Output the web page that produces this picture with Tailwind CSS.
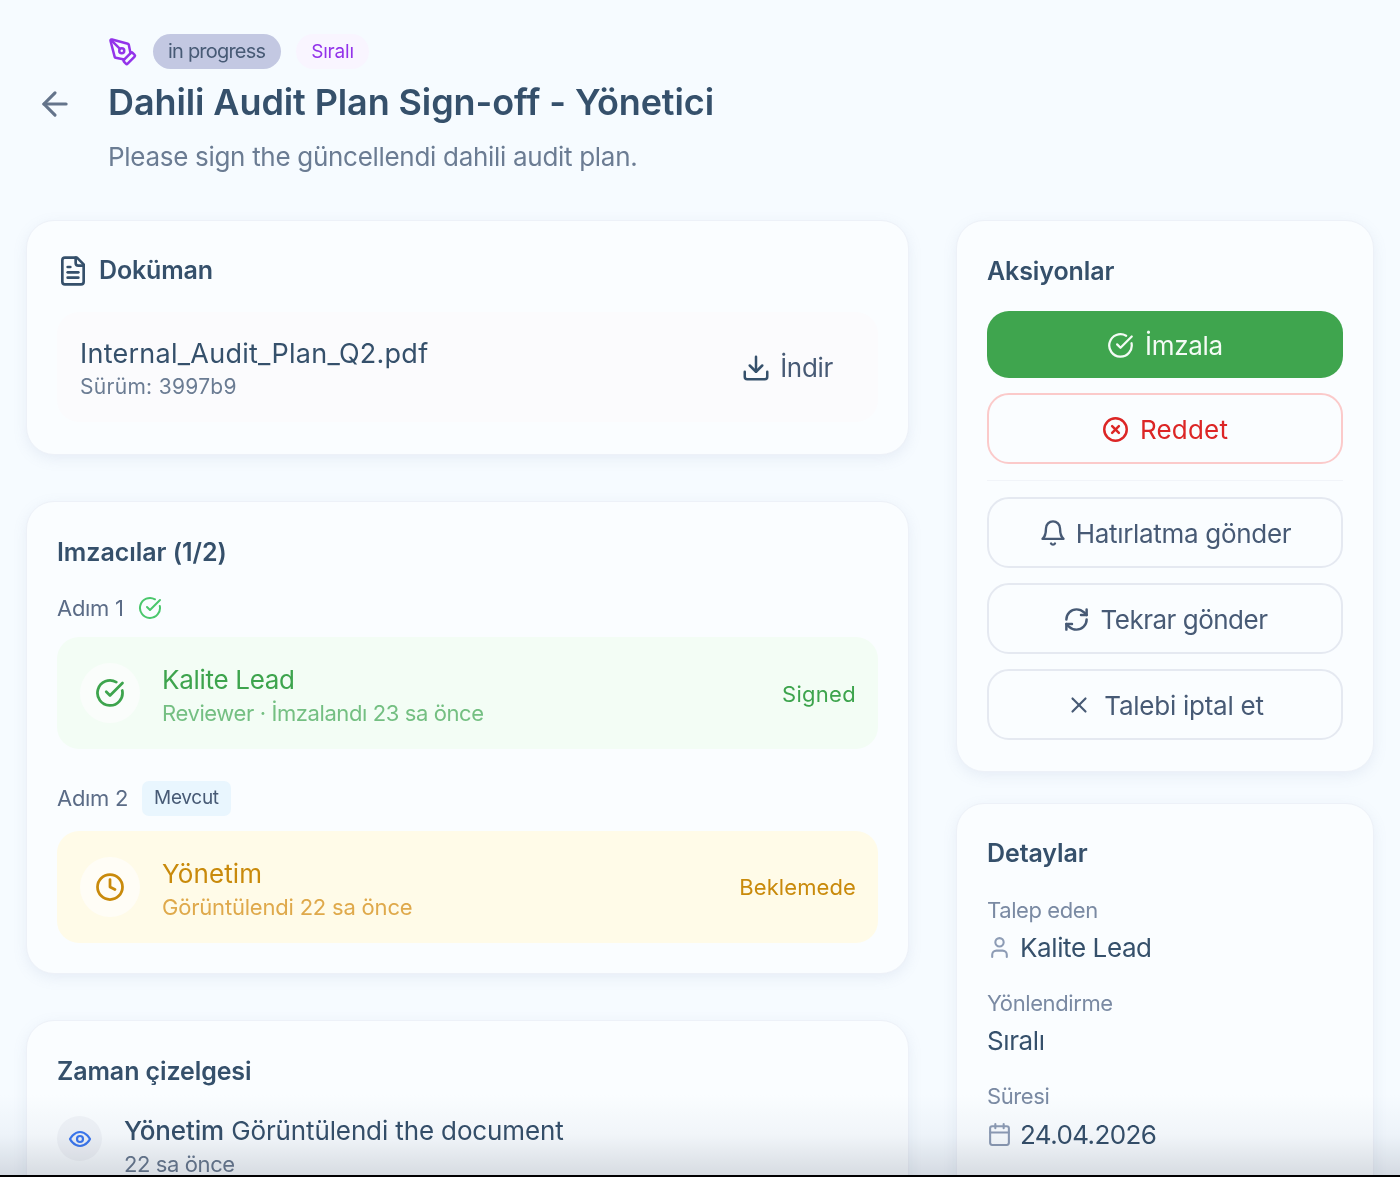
<!DOCTYPE html>
<html lang="en">
<head>
    <meta charset="UTF-8">
    <title>Dahili Audit Plan Sign-off</title>
    <script src="https://cdn.jsdelivr.net/npm/@tailwindcss/browser@4"></script>
</head>
<body class="bg-[#f6fbff] font-['Inter',sans-serif] text-[#35506b]">
    <div class="relative h-[1177px] w-[1400px] overflow-hidden">

        <!-- header -->
        <div class="flex pl-[36px] pt-[34px]">
            <svg class="mt-[51px] h-[38px] w-[38px] text-[#64748b]" viewBox="0 0 24 24" fill="none" stroke="currentColor" stroke-width="2" stroke-linecap="round" stroke-linejoin="round"><path d="M19 12H5"/><path d="m12 19-7-7 7-7"/></svg>
            <div class="ml-[34px]">
                <div class="flex h-[35px] items-center gap-[15px]">
                    <svg class="h-[30px] w-[30px] text-[#9333ea]" viewBox="0 0 24 24" fill="none" stroke="currentColor" stroke-width="2" stroke-linecap="round" stroke-linejoin="round"><path d="M15.707 21.293a1 1 0 0 1-1.414 0l-1.586-1.586a1 1 0 0 1 0-1.414l5.586-5.586a1 1 0 0 1 1.414 0l1.586 1.586a1 1 0 0 1 0 1.414z"/><path d="m18 13-1.375-6.874a1 1 0 0 0-.746-.776L3.235 2.028a1 1 0 0 0-1.207 1.207L5.35 15.879a1 1 0 0 0 .776.746L13 18"/><path d="m2.3 2.3 7.286 7.286"/><circle cx="11" cy="11" r="2"/></svg>
                    <span class="flex h-[35px] items-center rounded-full bg-[#c3c8e2] pb-[2px] pl-[15px] pr-[16px] text-[20px] tracking-[-0.8px] text-[#475a75]">in progress</span>
                    <span class="flex h-[35px] items-center rounded-full bg-[#f9f5ff] px-[15px] pt-[1px] text-[19px] tracking-[-0.2px] text-[#9333ea]">Sıralı</span>
                </div>
                <h1 class="mt-[10px] text-[36px] leading-[46px] font-semibold tracking-[-0.1px]">Dahili Audit Plan Sign-off - Yönetici</h1>
                <p class="mt-[14px] text-[26px] leading-[36px] tracking-[-0.3px] text-[#6b7c93]">Please sign the güncellendi dahili audit plan.</p>
            </div>
        </div>

        <!-- columns -->
        <div class="mt-[45px] flex items-start gap-[47px] pl-[26px]">
            <div class="flex w-[883px] flex-col">

                <div class="h-[235px] rounded-[28px] border border-[#edf1f8] bg-[#fafdff] px-[30px] pt-[31px] shadow-[0_4px_14px_rgba(120,140,180,0.12)]">
                    <div class="flex h-[38px] items-center gap-[10px]">
                        <svg class="h-[32px] w-[32px]" viewBox="0 0 24 24" fill="none" stroke="currentColor" stroke-width="2" stroke-linecap="round" stroke-linejoin="round"><path d="M15 2H6a2 2 0 0 0-2 2v16a2 2 0 0 0 2 2h12a2 2 0 0 0 2-2V7Z"/><path d="M14 2v4a2 2 0 0 0 2 2h4"/><path d="M10 9H8"/><path d="M16 13H8"/><path d="M16 17H8"/></svg>
                        <h2 class="text-[25px] font-semibold tracking-[-0.15px]">Doküman</h2>
                    </div>
                    <div class="mt-[22px] flex h-[110px] items-center justify-between rounded-[22px] bg-[#fbfbfd] pl-[23px] pr-[45px]">
                        <div class="pt-[4px]">
                            <div class="text-[27px] leading-[36px] tracking-[0.25px]">Internal_Audit_Plan_Q2.pdf</div>
                            <div class="text-[21px] leading-[30px] tracking-[0.3px] text-[#6b7c93]">Sürüm: 3997b9</div>
                        </div>
                        <div class="flex items-center gap-[9px] pt-[1px]">
                            <svg class="h-[30px] w-[30px]" viewBox="0 0 24 24" fill="none" stroke="currentColor" stroke-width="2" stroke-linecap="round" stroke-linejoin="round"><path d="M21 15v4a2 2 0 0 1-2 2H5a2 2 0 0 1-2-2v-4"/><path d="m7 10 5 5 5-5"/><path d="M12 15V3"/></svg>
                            <span class="text-[26px] tracking-[-0.3px] text-[#475a75]">İndir</span>
                        </div>
                    </div>
                </div>

                <div class="mt-[46px] h-[473px] rounded-[28px] border border-[#edf1f8] bg-[#fafdff] px-[30px] pt-[31px] shadow-[0_4px_14px_rgba(120,140,180,0.12)]">
                    <h2 class="h-[38px] text-[25px] leading-[38px] font-semibold tracking-[-0.05px]">Imzacılar (1/2)</h2>
                    <div class="mt-[22px] flex h-[30px] items-center gap-[14px] text-[22px] tracking-[-0.3px] text-[#5b6c87]">
                        Adım 1
                        <svg class="h-[24px] w-[24px] text-[#4ac76c]" viewBox="0 0 24 24" fill="none" stroke="currentColor" stroke-width="2" stroke-linecap="round" stroke-linejoin="round"><path d="M21.8 10A10 10 0 1 1 17 3.3"/><path d="m9 11 3 3L22 4"/></svg>
                    </div>
                    <div class="mt-[14px] flex h-[112px] items-center justify-between rounded-[22px] bg-[#f3fdf5] pl-[23px] pr-[22px]">
                        <div class="flex items-center gap-[22px]">
                            <div class="flex h-[60px] w-[60px] items-center justify-center rounded-full bg-[#fafdfb]">
                                <svg class="h-[30px] w-[30px] text-[#3da44d]" viewBox="0 0 24 24" fill="none" stroke="currentColor" stroke-width="2.2" stroke-linecap="round" stroke-linejoin="round"><path d="M21.8 10A10 10 0 1 1 17 3.3"/><path d="m9 11 3 3L22 4"/></svg>
                            </div>
                            <div class="pt-[4px]">
                                <div class="text-[26px] leading-[36px] tracking-[-0.3px] text-[#3da44d]">Kalite Lead</div>
                                <div class="text-[22px] leading-[30px] tracking-[-0.4px] text-[#74bf82]">Reviewer · İmzalandı 23 sa önce</div>
                            </div>
                        </div>
                        <span class="pt-[2px] text-[22px] tracking-[0.3px] text-[#3da44d]">Signed</span>
                    </div>
                    <div class="mt-[32px] flex h-[35px] items-center gap-[14px] text-[22px] tracking-[-0.3px] text-[#5b6c87]">
                        Adım 2
                        <span class="flex h-[35px] items-center rounded-[7px] bg-[#e9f6fe] px-[12px] text-[19px] tracking-[-0.3px] text-[#475a75]">Mevcut</span>
                    </div>
                    <div class="mt-[15px] flex h-[112px] items-center justify-between rounded-[22px] bg-[#fffbe8] pl-[23px] pr-[22px]">
                        <div class="flex items-center gap-[22px]">
                            <div class="flex h-[60px] w-[60px] items-center justify-center rounded-full bg-[#fffdf6]">
                                <svg class="h-[30px] w-[30px] text-[#c98a0b]" viewBox="0 0 24 24" fill="none" stroke="currentColor" stroke-width="2.2" stroke-linecap="round" stroke-linejoin="round"><circle cx="12" cy="12" r="10"/><path d="M12 6v6l4 2"/></svg>
                            </div>
                            <div class="pt-[3px]">
                                <div class="text-[26px] leading-[36px] tracking-[0.1px] text-[#c98a0b]">Yönetim</div>
                                <div class="text-[22px] leading-[30px] tracking-[-0.2px] text-[#dfa94b]">Görüntülendi 22 sa önce</div>
                            </div>
                        </div>
                        <span class="pt-[1px] text-[22px] tracking-[0.1px] text-[#c98a0b]">Beklemede</span>
                    </div>
                </div>

                <div class="mt-[46px] h-[300px] rounded-[28px] border border-[#edf1f8] bg-[#fafdff] px-[30px] pt-[31px] shadow-[0_4px_14px_rgba(120,140,180,0.12)]">
                    <h2 class="h-[38px] text-[25px] leading-[38px] font-semibold tracking-[-0.1px]">Zaman çizelgesi</h2>
                    <div class="mt-[26px] flex gap-[22px]">
                        <div class="flex h-[45px] w-[45px] items-center justify-center rounded-full bg-[#f1f4f8]">
                            <svg class="h-[24px] w-[24px] text-[#3b78f0]" viewBox="0 0 24 24" fill="none" stroke="currentColor" stroke-width="2.2" stroke-linecap="round" stroke-linejoin="round"><path d="M2 12s3.600-7 10-7 10 7 10 7-3.600 7-10 7-10-7-10-7Z"/><circle cx="12" cy="12" r="3"/></svg>
                        </div>
                        <div class="-mt-[3px]">
                            <div class="text-[26px] leading-[36px] tracking-[-0.13px]"><span class="font-medium">Yönetim</span> Görüntülendi the document</div>
                            <div class="text-[22px] leading-[30px] tracking-[-0.4px] text-[#6b7c93]">22 sa önce</div>
                        </div>
                    </div>
                </div>
            </div>

            <div class="flex w-[418px] flex-col">
                <div class="h-[552px] rounded-[28px] border border-[#edf1f8] bg-[#fafdff] px-[30px] pt-[31px] shadow-[0_4px_14px_rgba(120,140,180,0.12)]">
                    <h2 class="h-[38px] text-[25px] leading-[38px] font-semibold tracking-[-0.1px]">Aksiyonlar</h2>
                    <div class="mt-[21px] flex h-[67px] items-center justify-center gap-[11px] rounded-[22px] bg-[#3fa54e] pt-[1px] text-[26px] tracking-[-0.3px] text-[#f4fbf5]">
                        <svg class="h-[27px] w-[27px]" viewBox="0 0 24 24" fill="none" stroke="currentColor" stroke-width="2" stroke-linecap="round" stroke-linejoin="round"><path d="M21.8 10A10 10 0 1 1 17 3.3"/><path d="m9 11 3 3L22 4"/></svg>
                        İmzala
                    </div>
                    <div class="mt-[15px] flex h-[71px] items-center justify-center gap-[11px] rounded-[22px] border-2 border-[#fbcaca] pt-[2px] text-[26px] tracking-[0.2px] text-[#dc2626]">
                        <svg class="h-[27px] w-[27px]" viewBox="0 0 24 24" fill="none" stroke="currentColor" stroke-width="2.2" stroke-linecap="round" stroke-linejoin="round"><circle cx="12" cy="12" r="10"/><path d="m15 9-6 6"/><path d="m9 9 6 6"/></svg>
                        Reddet
                    </div>
                    <div class="mt-[16px] h-px bg-[#f1f4f9]"></div>
                    <div class="mt-[16px] flex flex-col gap-[15px]">
                        <div class="flex h-[71px] items-center justify-center gap-[9px] rounded-[22px] border-2 border-[#e5e9f1] pt-[1px] text-[26px] tracking-[-0.3px] text-[#475a75]">
                            <svg class="h-[28px] w-[28px]" viewBox="0 0 24 24" fill="none" stroke="currentColor" stroke-width="2" stroke-linecap="round" stroke-linejoin="round"><path d="M6 8a6 6 0 0 1 12 0c0 7 3 9 3 9H3s3-2 3-9"/><path d="M10.300 21a1.940 1.940 0 0 0 3.400 0"/></svg>
                            Hatırlatma gönder
                        </div>
                        <div class="flex h-[71px] items-center justify-center gap-[11px] rounded-[22px] border-2 border-[#e5e9f1] pt-[1px] text-[26px] tracking-[-0.5px] text-[#475a75]">
                            <svg class="h-[27px] w-[27px]" viewBox="0 0 24 24" fill="none" stroke="currentColor" stroke-width="2.2" stroke-linecap="round" stroke-linejoin="round"><path d="M3 12a9 9 0 0 1 9-9 9.750 9.750 0 0 1 6.740 2.740L21 8"/><path d="M21 3v5h-5"/><path d="M21 12a9 9 0 0 1-9 9 9.750 9.750 0 0 1-6.740-2.740L3 16"/><path d="M8 16H3v5"/></svg>
                            Tekrar gönder
                        </div>
                        <div class="flex h-[71px] items-center justify-center gap-[12px] rounded-[22px] border-2 border-[#e5e9f1] pt-[1px] text-[26px] tracking-[-0.25px] text-[#475a75]">
                            <svg class="h-[26px] w-[26px]" viewBox="0 0 24 24" fill="none" stroke="currentColor" stroke-width="2" stroke-linecap="round" stroke-linejoin="round"><path d="M18 6 6 18"/><path d="m6 6 12 12"/></svg>
                            Talebi iptal et
                        </div>
                    </div>
                </div>

                <div class="mt-[31px] h-[420px] rounded-[28px] border border-[#edf1f8] bg-[#fafdff] px-[30px] pt-[30px] shadow-[0_4px_14px_rgba(120,140,180,0.12)]">
                    <h2 class="h-[38px] text-[25px] leading-[38px] font-semibold tracking-[-0.1px]">Detaylar</h2>
                    <div class="mt-[23px] flex h-[30px] items-center text-[22px] tracking-[-0.4px] text-[#7a8aa3]">Talep eden</div>
                    <div class="mt-[4px] flex h-[36px] items-center gap-[8px] text-[26px] tracking-[-0.4px]">
                        <svg class="h-[25px] w-[25px] text-[#8d9cb5]" viewBox="0 0 24 24" fill="none" stroke="currentColor" stroke-width="2" stroke-linecap="round" stroke-linejoin="round"><path d="M19 21v-2a4 4 0 0 0-4-4H9a4 4 0 0 0-4 4v2"/><circle cx="12" cy="7" r="4"/></svg>
                        Kalite Lead
                    </div>
                    <div class="mt-[23px] flex h-[30px] items-center text-[22px] tracking-[-0.4px] text-[#7a8aa3]">Yönlendirme</div>
                    <div class="mt-[4px] flex h-[36px] items-center text-[26px] tracking-[-0.4px]">Sıralı</div>
                    <div class="mt-[23px] flex h-[30px] items-center text-[22px] tracking-[-0.4px] text-[#7a8aa3]">Süresi</div>
                    <div class="mt-[5px] flex h-[36px] items-center gap-[8px] text-[26px] tracking-[-0.6px]">
                        <svg class="h-[25px] w-[25px] text-[#8d9cb5]" viewBox="0 0 24 24" fill="none" stroke="currentColor" stroke-width="2" stroke-linecap="round" stroke-linejoin="round"><path d="M8 2v4"/><path d="M16 2v4"/><rect width="18" height="18" x="3" y="4" rx="2"/><path d="M3 10h18"/></svg>
                        24.04.2026
                    </div>
                </div>
            </div>
        </div>

        <!-- bottom fade over the content, then the dark edge of the capture -->
        <div class="pointer-events-none absolute inset-x-0 bottom-[2px] h-[80px] bg-gradient-to-b from-white via-[#f6f7f9] to-[#dcdee2] mix-blend-multiply"></div>
        <div class="absolute inset-x-0 bottom-0 h-[2px] bg-black"></div>
    </div>
</body>
</html>
